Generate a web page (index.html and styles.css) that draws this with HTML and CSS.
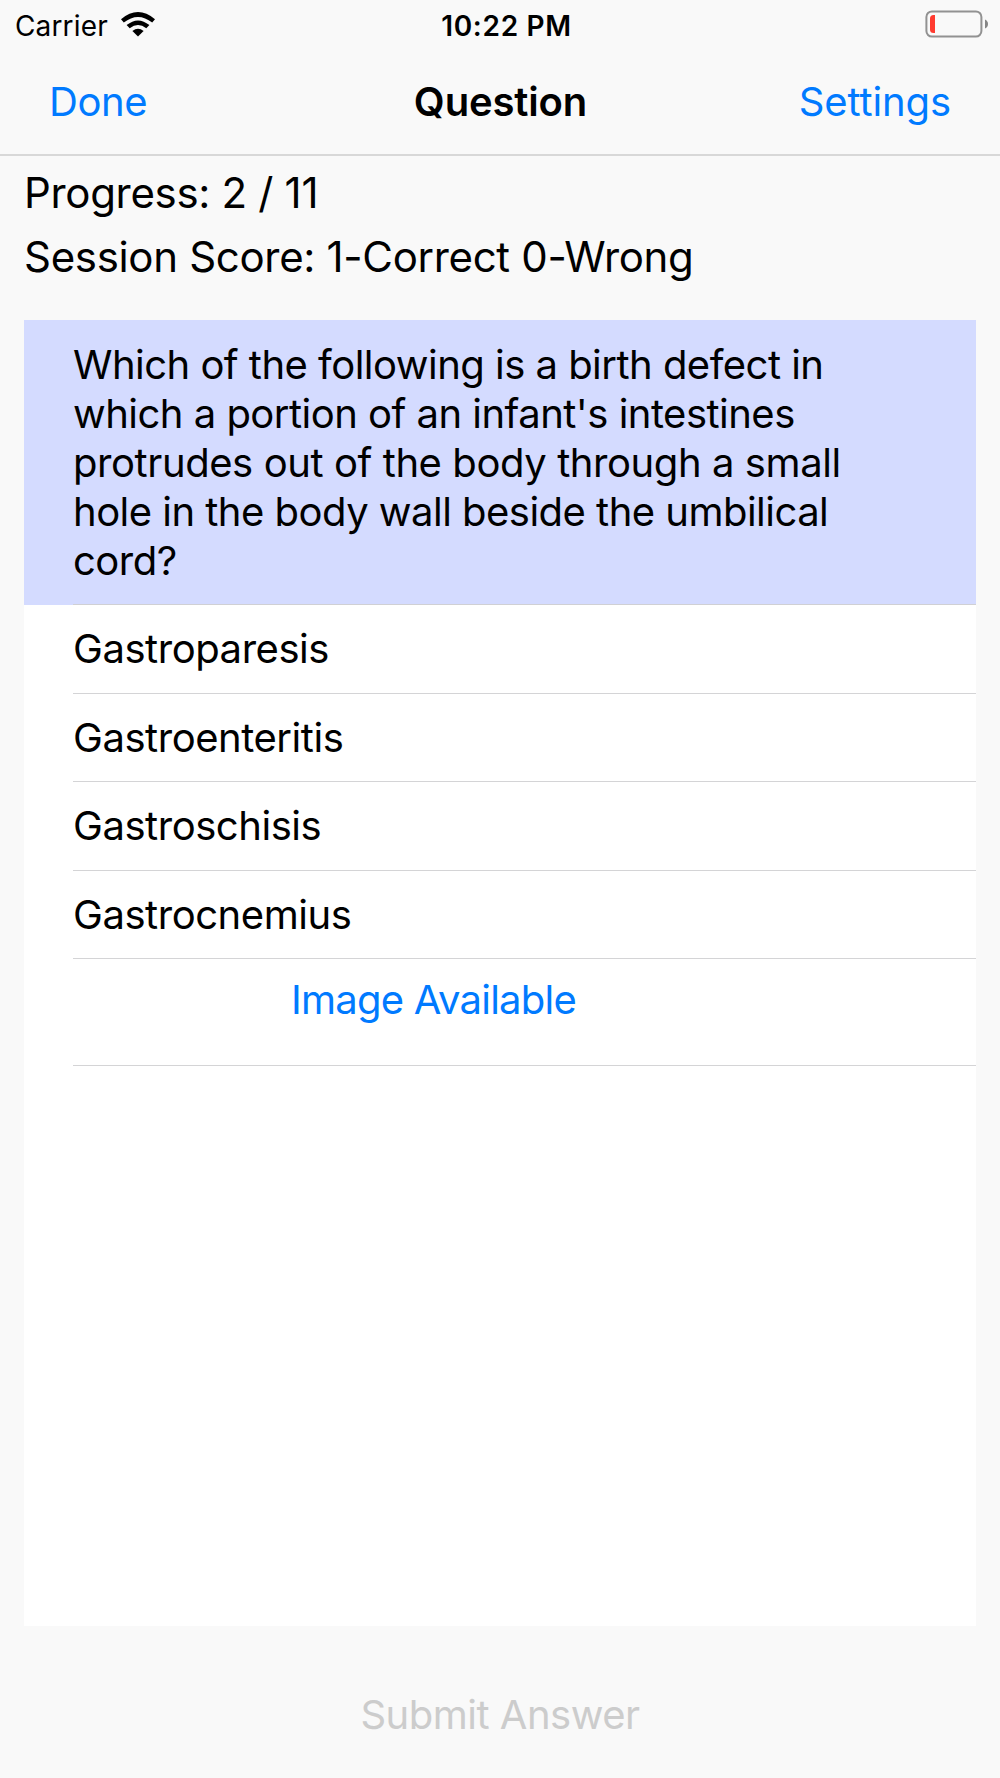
FILE: index.html
```
<!DOCTYPE html>
<html lang="en">
<head>
    <meta charset="UTF-8">
    <meta name="viewport" content="width=device-width, initial-scale=1.0">
    <title>Question</title>
    <link rel="stylesheet" href="styles.css">
</head>
<body>
    <div class="status-bar">
        <div class="carrier">
            <span>Carrier</span>
            <svg class="wifi" width="34" height="25" viewBox="0 0 34 25">
                <path d="M0 7.2 Q17 -7.2 34 7.2 L31.2 10.6 Q17 -0.8 2.8 10.6 Z"/>
                <path d="M5.6 13.1 Q17 3.7 28.4 13.1 L25.3 16.3 Q17 9.7 8.7 16.3 Z"/>
                <path d="M11.4 19 Q17 14.4 22.6 19 L17 24.6 Z"/>
            </svg>
        </div>
        <div class="time">10:22 PM</div>
        <svg class="battery" width="64" height="28" viewBox="0 0 64 28">
            <rect x="1.4" y="1.4" width="55" height="25.2" rx="5.5" fill="none" stroke="#929292" stroke-width="2"/>
            <path d="M10 5 V23 H8.5 Q5 23 5 19.5 V8.500 Q5 5 8.500 5 Z" fill="#ff3b30"/>
            <path d="M60 9.500 Q63 11 63 14 Q63 17 60 18.500 Z" fill="#858585"/>
        </svg>
    </div>
    <div class="nav-bar">
        <a class="done">Done</a>
        <h1>Question</h1>
        <a class="settings">Settings</a>
    </div>
    <div class="progress">
        <p>Progress: 2 / 11</p>
        <p>Session Score: 1-Correct 0-Wrong</p>
    </div>
    <div class="table">
        <div class="question">
            Which of the following is a birth defect in<br>
            which a portion of an infant's intestines<br>
            <span class="wide">protrudes out of the body through a small</span><br>
            hole in the body wall beside the umbilical<br>
            cord?
        </div>
        <ul class="answers">
            <li>Gastroparesis</li>
            <li>Gastroenteritis</li>
            <li>Gastroschisis</li>
            <li>Gastrocnemius</li>
            <li class="image-row"><a>Image Available</a></li>
        </ul>
    </div>
    <div class="footer">
        <button class="submit" disabled>Submit Answer</button>
    </div>
</body>
</html>
```
FILE: styles.css
```
* {
    margin: 0;
    padding: 0;
    box-sizing: border-box;
    font-family: Inter, "Liberation Sans", sans-serif;
}
body {
    display: flex;
    flex-direction: column;
    height: 1778px;
    background: #f9f9f9;
    color: #000;
    font-size: 40px;
}
.status-bar {
    display: grid;
    grid-template-columns: 1fr auto 1fr;
    align-items: center;
    height: 50px;
    padding: 0 11px 0 15px;
    font-size: 28px;
}
.carrier {
    display: flex;
    align-items: center;
    gap: 13px;
    letter-spacing: 0.15px;
}
.carrier span {
    padding-top: 2px;
}
.wifi {
    margin-top: -1px;
}
.time {
    font-weight: 600;
    padding: 2px 0 0 9px;
    letter-spacing: 0.7px;
}
.battery {
    justify-self: end;
    margin-top: -2px;
}
.nav-bar {
    display: grid;
    grid-template-columns: 1fr auto 1fr;
    align-items: center;
    height: 106px;
    padding: 0 49px 2px 49px;
    border-bottom: 2px solid #d8d8d8;
    letter-spacing: -0.45px;
}
.nav-bar h1 {
    font-size: 40px;
    font-weight: 600;
    padding-left: 1px;
    letter-spacing: -0.15px;
}
a {
    color: #007aff;
}
.settings {
    justify-self: end;
    letter-spacing: -0.1px;
}
.progress {
    height: 164px;
    padding: 5px 24px;
    font-size: 42px;
    line-height: 64px;
    letter-spacing: -0.32px;
}
.table {
    height: 1306px;
    margin: 0 24px;
    background: #fff;
}
.question {
    height: 285px;
    padding: 20px 49px;
    background: #d4dbff;
    line-height: 49px;
    letter-spacing: -0.52px;
    white-space: nowrap;
}
.question .wide {
    letter-spacing: -0.42px;
}
.answers {
    list-style: none;
    margin-left: 49px;
    border-top: 1px solid #d0d0d4;
    margin-top: -1px;
    letter-spacing: -0.45px;
}
.answers li {
    height: 88.5px;
    line-height: 88.5px;
    border-bottom: 1px solid #d4d4d6;
}
.answers .image-row {
    height: 106.5px;
    padding-left: 218px;
    line-height: 82px;
    letter-spacing: -0.75px;
}
.footer {
    flex: 1;
    display: flex;
    justify-content: center;
    padding-top: 24px;
}
.submit {
    border: none;
    background: none;
    color: #ccc;
    font-size: 40px;
    letter-spacing: -0.5px;
}
```
